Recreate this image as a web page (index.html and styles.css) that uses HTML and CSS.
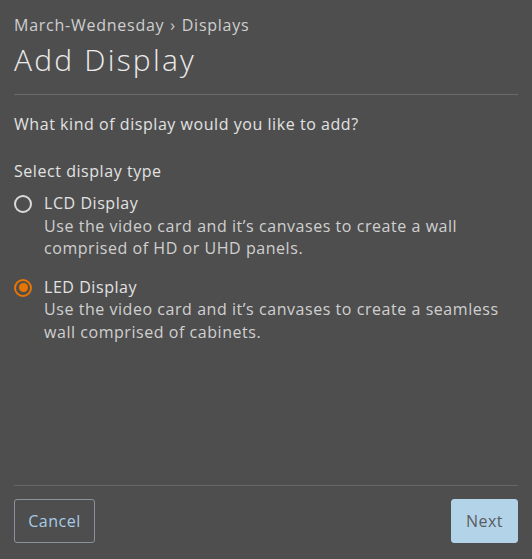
FILE: index.html
```html
<!DOCTYPE html>
<html>
<head>
<meta charset="utf-8">
<link rel="stylesheet" href="styles.css">
</head>
<body>
<div class="page">
  <header class="head">
    <nav class="crumbs">March-Wednesday <span class="sep">›</span> Displays</nav>
    <h1 class="title">Add Display</h1>
  </header>
  <main class="body">
    <p class="question">What kind of display would you like to add?</p>
    <div class="group-label">Select display type</div>
    <div class="options">
      <label class="option">
        <span class="radio"></span>
        <span class="opt-text">
          <span class="opt-title">LCD Display</span>
          <span class="opt-desc">Use the video card and it’s canvases to create a wall comprised of HD or UHD panels.</span>
        </span>
      </label>
      <label class="option">
        <span class="radio checked"></span>
        <span class="opt-text">
          <span class="opt-title">LED Display</span>
          <span class="opt-desc">Use the video card and it’s canvases to create a seamless wall comprised of cabinets.</span>
        </span>
      </label>
    </div>
  </main>
  <footer class="foot">
    <button class="btn btn-outline">Cancel</button>
    <button class="btn btn-primary">Next</button>
  </footer>
</div>
</body>
</html>
```
FILE: styles.css
```css
html, body {
  margin: 0;
  height: 100%;
  background: #4e4e4e;
}
body {
  font-family: "Open Sans", "DejaVu Sans", sans-serif;
  font-size: 16px;
  letter-spacing: 0.55px;
  color: #dedede;
}
.page {
  height: 559px;
  box-sizing: border-box;
  padding: 14px 14px 0;
  display: flex;
  flex-direction: column;
}
.head {
  border-bottom: 1px solid #6a6a6a;
  padding-bottom: 16px;
}
.crumbs {
  font-size: 16px;
  line-height: 22px;
  letter-spacing: 0.75px;
  color: #cfcfcf;
}
.sep {
  padding: 0 1px;
}
.title {
  margin: 6px 0 0;
  font-size: 30px;
  font-weight: 300;
  line-height: 36px;
  letter-spacing: 2.2px;
  color: #ebebeb;
}
.body {
  flex: 1;
}
.question {
  margin: 18px 0 0;
  line-height: 22px;
  color: #e2e2e2;
}
.group-label {
  margin-top: 25px;
  line-height: 22px;
  color: #e2e2e2;
}
.options {
  display: flex;
  flex-direction: column;
  gap: 16px;
  margin-top: 10px;
}
.option {
  display: flex;
  gap: 12px;
}
.radio {
  flex: none;
  width: 18px;
  height: 18px;
  box-sizing: border-box;
  border: 2px solid #dadada;
  border-radius: 50%;
  margin-top: 3px;
  display: flex;
  align-items: center;
  justify-content: center;
}
.radio.checked {
  border-color: #e87500;
}
.radio.checked::after {
  content: "";
  width: 9px;
  height: 9px;
  border-radius: 50%;
  background: #e87500;
}
.opt-text {
  display: flex;
  flex-direction: column;
  line-height: 22.5px;
}
.opt-title {
  color: #e2e2e2;
}
.opt-desc {
  color: #d0d0d0;
}
.foot {
  border-top: 1px solid #666;
  padding-top: 13px;
  padding-bottom: 16px;
  display: flex;
  justify-content: space-between;
}
.btn {
  font-family: inherit;
  font-size: 16px;
  letter-spacing: 0.5px;
  height: 44px;
  border-radius: 3px;
  padding: 0 13px;
}
.btn-outline {
  background: transparent;
  border: 1px solid #8a939b;
  color: #a7cce6;
  width: 81px;
}
.btn-primary {
  background: #b3d3e9;
  border: 1px solid #b3d3e9;
  color: #595d61;
  width: 67px;
}
```
